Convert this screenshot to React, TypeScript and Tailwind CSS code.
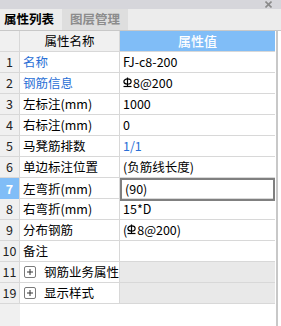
import React from 'react';

const font = { fontFamily: '"Noto Sans CJK SC", "Noto Sans", sans-serif' };

function Rebar() {
  return (
    <svg width="9" height="11" viewBox="0 0 9 11" className="-mt-[2px] mr-[1px] inline-block align-middle">
      <ellipse cx="4.5" cy="4.5" rx="3.6" ry="2.6" fill="none" stroke="#000" strokeWidth="1.2" />
      <line x1="4.5" y1="0.5" x2="4.5" y2="9.5" stroke="#000" strokeWidth="1.2" />
      <line x1="0.5" y1="9.5" x2="8.5" y2="9.5" stroke="#000" strokeWidth="1.2" />
    </svg>
  );
}

function PlusBox() {
  return (
    <span className="mr-[8px] ml-[1px] inline-flex h-[12px] w-[12px] items-center justify-center rounded-[2px] border border-[#7a7a7a] bg-white">
      <svg width="6" height="6" viewBox="0 0 6 6">
        <line x1="0" y1="3" x2="6" y2="3" stroke="#333" strokeWidth="1" />
        <line x1="3" y1="0" x2="3" y2="6" stroke="#333" strokeWidth="1" />
      </svg>
    </span>
  );
}

type Row = {
  no: string;
  name: React.ReactNode;
  value?: React.ReactNode;
  blueName?: boolean;
  blueValue?: boolean;
  selected?: boolean;
  group?: boolean;
};

const rows: Row[] = [
  { no: '1', name: '名称', value: 'FJ-c8-200', blueName: true },
  { no: '2', name: '钢筋信息', value: <><Rebar />8@200</>, blueName: true },
  { no: '3', name: '左标注(mm)', value: '1000' },
  { no: '4', name: '右标注(mm)', value: '0' },
  { no: '5', name: '马凳筋排数', value: '1/1', blueValue: true },
  { no: '6', name: '单边标注位置', value: '(负筋线长度)' },
  { no: '7', name: '左弯折(mm)', value: '(90)', selected: true },
  { no: '8', name: '右弯折(mm)', value: '15*D' },
  { no: '9', name: '分布钢筋', value: <>(<Rebar />8@200)</> },
  { no: '10', name: '备注', value: '' },
  { no: '11', name: '钢筋业务属性', group: true },
  { no: '19', name: '显示样式', group: true },
];

export default function App() {
  return (
    <div className="flex h-[326px] w-[281px] flex-col overflow-hidden bg-white text-[12.5px] text-black" style={font}>
      <div className="flex h-[9px] items-center justify-end bg-[#d6d6db] pr-[9px]">
        <svg width="7" height="7" viewBox="0 0 7 7">
          <line x1="0.5" y1="0.5" x2="6.5" y2="6.5" stroke="#8a8a8a" strokeWidth="1.6" />
          <line x1="6.5" y1="0.5" x2="0.5" y2="6.5" stroke="#8a8a8a" strokeWidth="1.6" />
        </svg>
      </div>
      <div className="flex h-[22px] border-b border-[#c8c8c8] bg-[#ececec]">
        <div className="flex w-[58px] items-center justify-center font-bold">属性列表</div>
        <div className="ml-[4px] flex w-[66px] items-center justify-center bg-[#dedede] font-bold text-[#8c8c8c]">
          图层管理
        </div>
      </div>
      <div className="flex flex-1">
        <div className="flex w-[275px] flex-col">
          <div className="grid h-[21px] grid-cols-[20px_100px_155px] border-b border-[#d8d8d8]">
            <div className="border-r border-[#d8d8d8] bg-[#f0f0f0]" />
            <div className="flex items-center justify-center border-r border-[#d8d8d8] bg-[#f0f0f0]">属性名称</div>
            <div className="flex items-center justify-center bg-[#80bdf7] text-[13px] font-medium text-white">属性值</div>
          </div>
          {rows.map((r) => (
            <div key={r.no} className="grid h-[21px] grid-cols-[20px_100px_155px] border-b border-[#d8d8d8]">
              <div
                className={
                  r.selected
                    ? 'flex items-center justify-center border-r border-[#d8d8d8] bg-[#80bdf7] font-bold text-white'
                    : 'flex items-center justify-center border-r border-[#d8d8d8] bg-[#f0f0f0] text-[#222]'
                }
              >
                {r.no}
              </div>
              <div
                className={
                  'flex items-center whitespace-nowrap border-r border-[#d8d8d8] pl-[3px] ' +
                  (r.blueName ? 'text-[#2a6fd6]' : '')
                }
              >
                {r.group && <PlusBox />}
                {r.name}
              </div>
              {r.group ? (
                <div className="bg-[#e9e9e9]" />
              ) : (
                <div
                  className={
                    'flex items-center whitespace-nowrap pl-[3px] ' +
                    (r.selected ? 'border-2 border-[#808080] pl-[2px] ' : '') +
                    (r.blueValue ? 'text-[#2a6fd6]' : '')
                  }
                >
                  {r.value}
                </div>
              )}
            </div>
          ))}
          <div className="flex flex-1">
            <div className="w-[20px] bg-[#f0f0f0]" />
          </div>
        </div>
        <div className="w-[1px] bg-white" />
        <div className="w-[2px] bg-[#c8c8c8]" />
      </div>
    </div>
  );
}
